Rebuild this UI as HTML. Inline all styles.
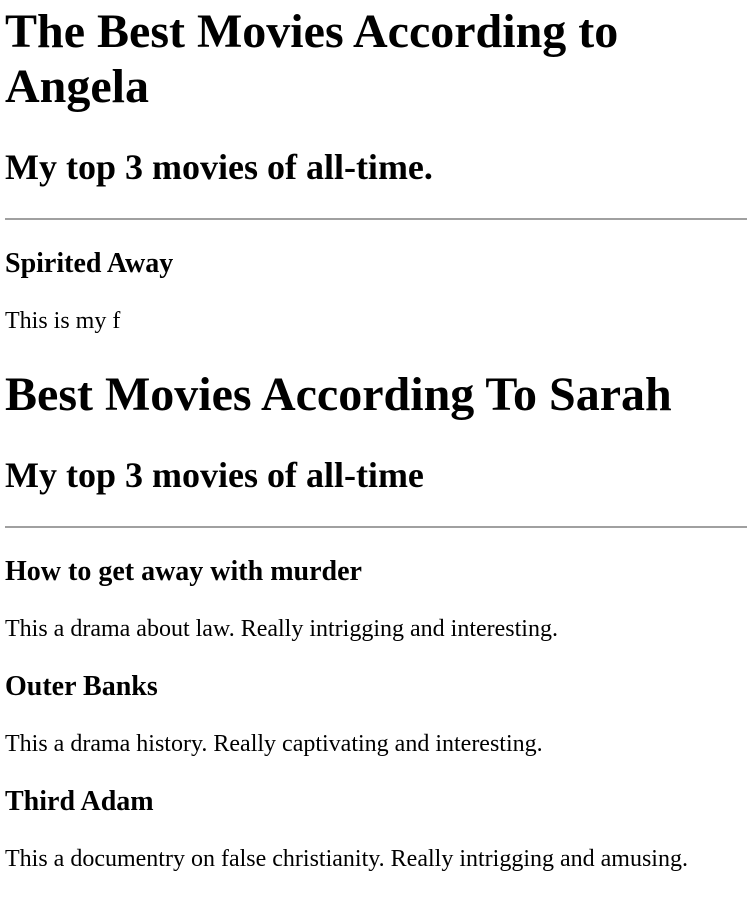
<!DOCTYPE html>
<html><head><style>
html,body{background:#fff}
body{margin:-28px -20px 0 5px;font-family:"Liberation Serif","Times New Roman",serif;font-size:24px;color:#000}
h1{font-size:48px;margin:32px 0}
h2{font-size:36px;margin:30px 0}
h3{font-size:28px;margin:28px 0}
p{margin:24px 0}
hr{margin:12px 0 11px;border:0;border-top:2px solid #a0a0a0;height:0}
</style></head><body>
<h1>The Best Movies According to Angela</h1>
<h2>My top 3 movies of all-time.</h2>
<hr>
<h3>Spirited Away</h3>
<p>This is my f</p>
<h1>Best Movies According To Sarah</h1>
<h2>My top 3 movies of all-time</h2>
<hr>
<h3>How to get away with murder</h3>
<p>This a drama about law. Really intrigging and interesting.</p>
<h3>Outer Banks</h3>
<p>This a drama history. Really captivating and interesting.</p>
<h3>Third Adam</h3>
<p>This a documentry on false christianity. Really intrigging and amusing.</p>
</body></html>
